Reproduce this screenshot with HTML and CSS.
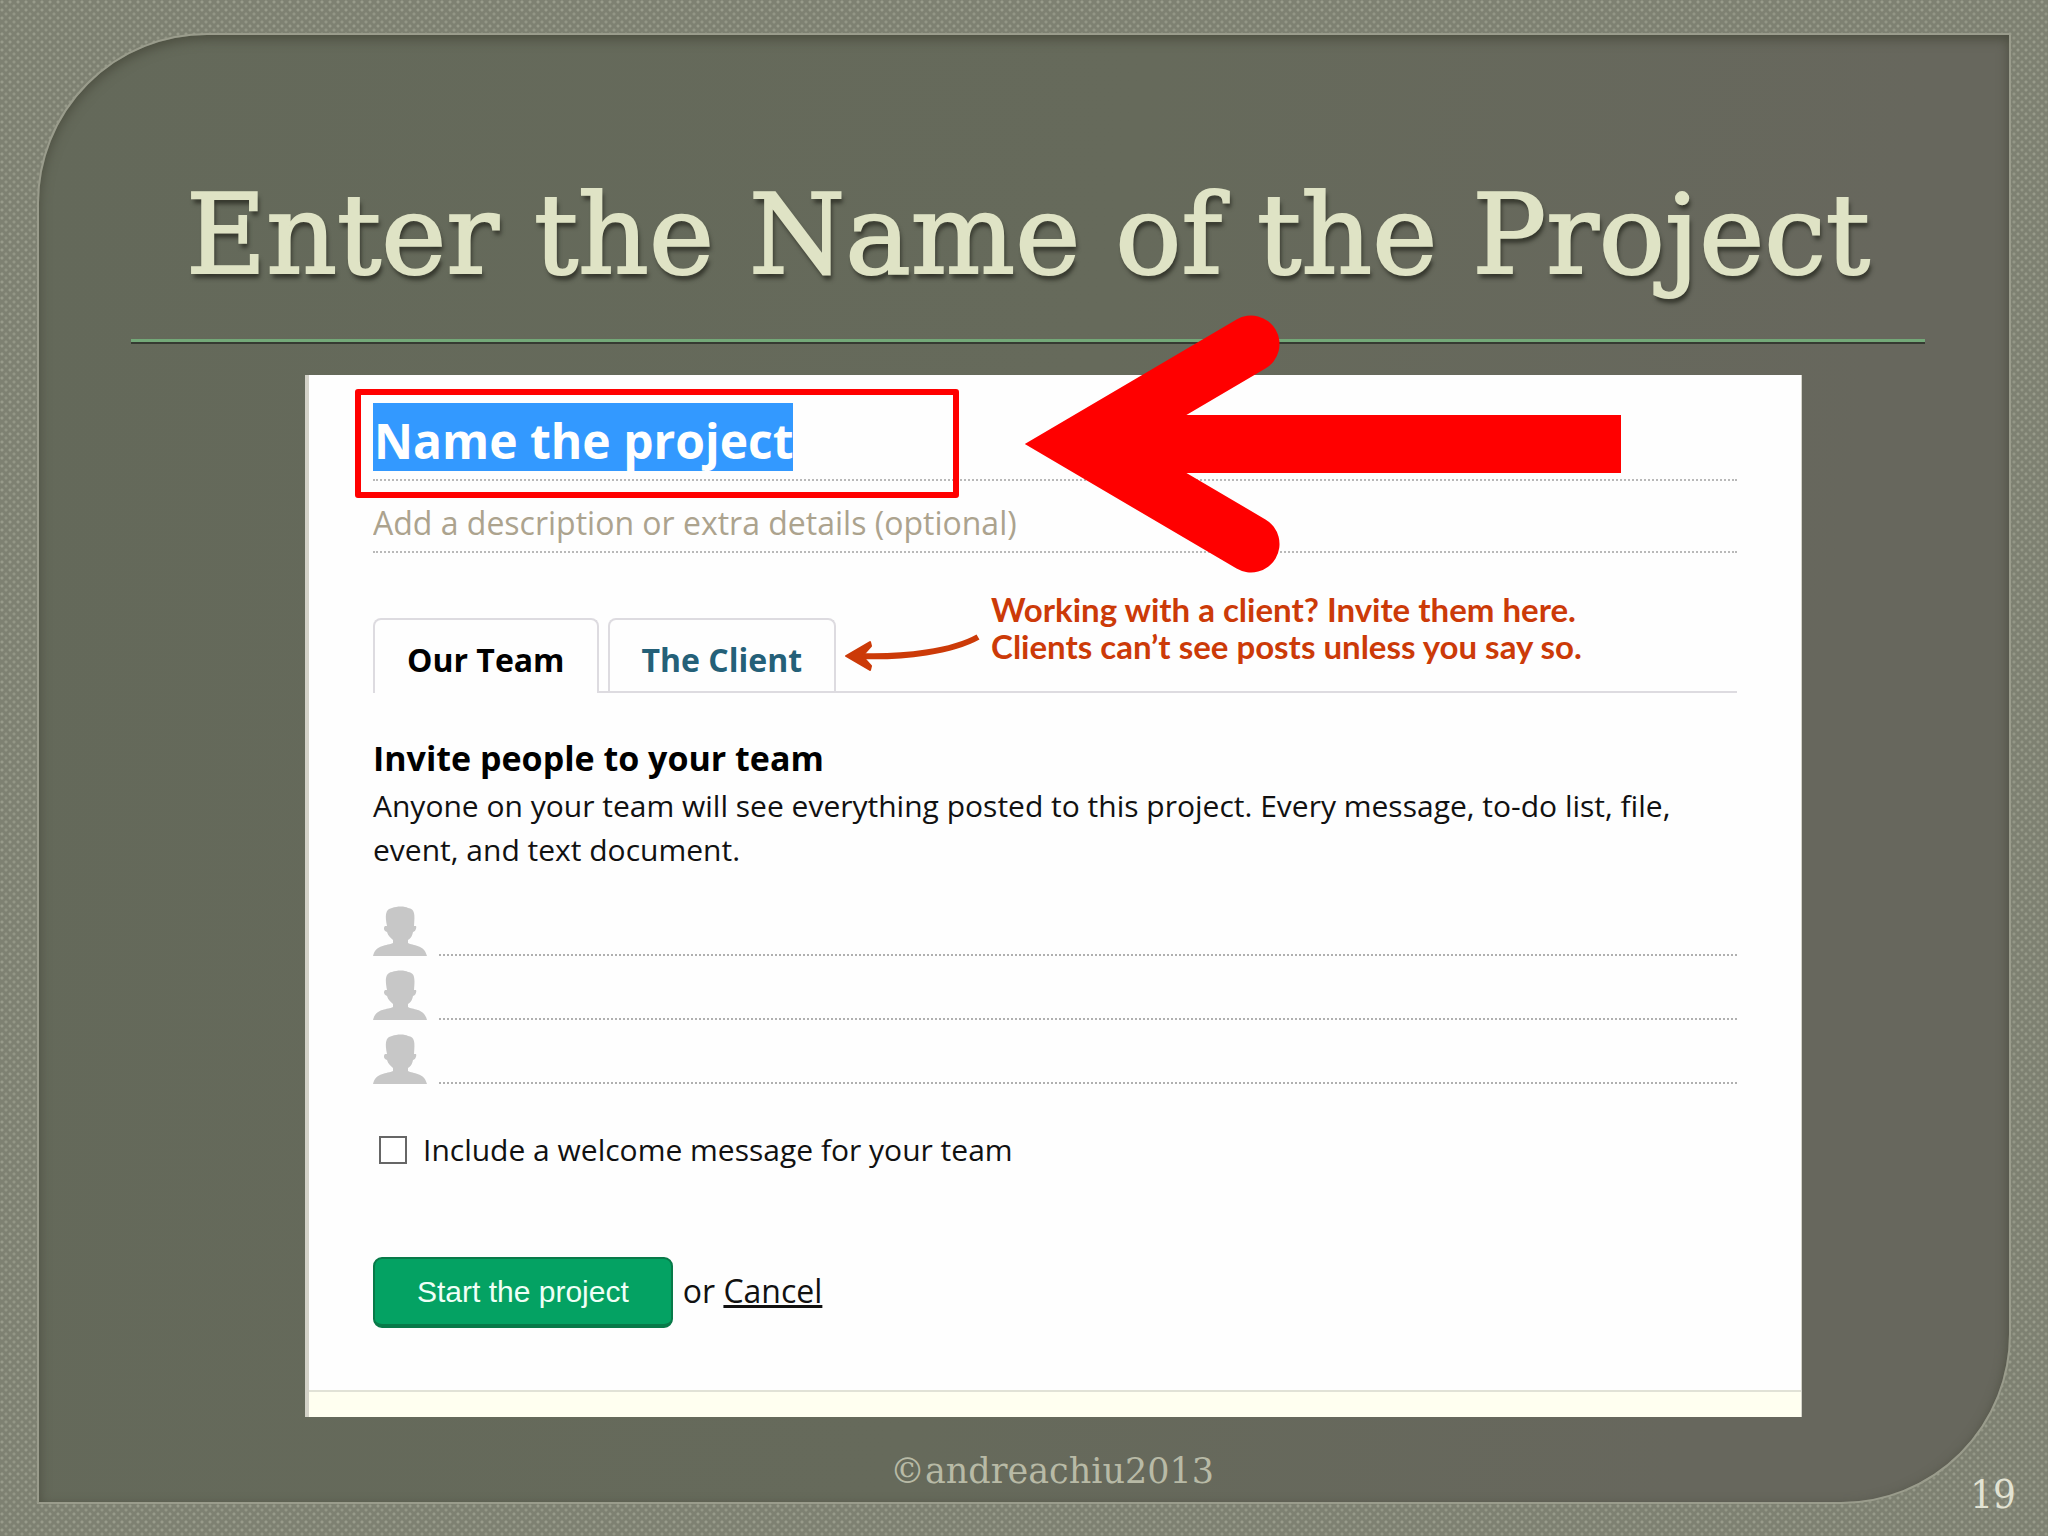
FILE: index.html
```html
<!DOCTYPE html>
<html lang="en">
<head>
<meta charset="utf-8">
<title>Enter the Name of the Project</title>
<link rel="stylesheet" href="styles.css">
</head>
<body>
<main class="slide">
  <h1 class="title">Enter the Name of the Project</h1>
  <div class="rule"></div>

  <form class="card">
    <div class="card-body">
      <div class="field field-name">
        <input class="name-input" type="text" value="Name the project" aria-label="Project name">
      </div>
      <div class="field field-desc">
        <input class="desc-input" type="text" placeholder="Add a description or extra details (optional)" aria-label="Description">
      </div>

      <div class="tabs">
        <button class="tab tab-active" type="button">Our Team</button>
        <button class="tab" type="button">The Client</button>
        <div class="hint">
          <svg class="hint-arrow" viewBox="0 0 136 40" aria-hidden="true">
            <path d="M133 5C108 19 60 26 12 24" fill="none" stroke="#cc3a08" stroke-width="6"/>
            <path d="M1 24L25 10L26 14L17 24L26 34L25 38Z" fill="#cc3a08" stroke="#cc3a08" stroke-width="2" stroke-linejoin="round"/>
          </svg>
          <p class="hint-text">Working with a client? Invite them here.<br>Clients can’t see posts unless you say so.</p>
        </div>
      </div>

      <h2 class="heading">Invite people to your team</h2>
      <p class="intro">Anyone on your team will see everything posted to this project. Every message, to-do list, file, event, and text document.</p>

      <svg class="symbols" aria-hidden="true">
        <symbol id="person" viewBox="0 0 54 50">
          <path d="M14 20C12 10 12 3 19 2C24 0 32 0 35 2C42 3 42 8 41 20L43 20C44 22 42 26 40 26C39 31 37 33 35 34L35 37C40 40 51 38 54 50H0C3 38 14 40 20 37L20 34C18 32 15 30 14 26C11 25 10 22 12 20Z" fill="#c7c7c7"/>
        </symbol>
      </svg>
      <div class="people">
        <div class="person"><svg class="avatar" aria-hidden="true"><use href="#person"/></svg><input class="person-input" type="text" aria-label="First person"></div>
        <div class="person"><svg class="avatar" aria-hidden="true"><use href="#person"/></svg><input class="person-input" type="text" aria-label="Second person"></div>
        <div class="person"><svg class="avatar" aria-hidden="true"><use href="#person"/></svg><input class="person-input" type="text" aria-label="Third person"></div>
      </div>

      <label class="welcome"><input class="check" type="checkbox">Include a welcome message for your team</label>

      <div class="actions">
        <button class="submit" type="button">Start the project</button>
        <span class="alternative">or <a class="cancel" href="#">Cancel</a></span>
      </div>
    </div>
    <div class="strip"></div>

    <div class="mark-box"></div>
    <svg class="mark-arrow" viewBox="0 0 600 260" aria-hidden="true">
      <path d="M229 31L59 131L229 231" fill="none" stroke="#f00" stroke-width="57" stroke-linecap="round"/>
      <path d="M59 102H599V160H59Z" fill="#f00"/>
    </svg>
  </form>

  <p class="credit">©andreachiu2013</p>
</main>
<p class="page-number">19</p>
</body>
</html>
```
FILE: styles.css
```css
* { box-sizing: border-box; }

body {
  margin: 0;
  min-height: 100vh;
  padding: 33px 37px 32px;
  position: relative;
  display: flex;
  background-color: #7e8172;
  background-image:
    radial-gradient(circle at 2px 2px, #989b8b 1px, transparent 2px),
    radial-gradient(circle at 6px 6px, #939686 1px, transparent 2px);
  background-size: 8px 8px;
  font-family: "Open Sans", "Noto Sans", sans-serif;
  font-size: 30px;
  color: #111;
}

h1, h2, p { margin: 0; }

.slide {
  flex: 1;
  display: flex;
  flex-direction: column;
  border: 2px solid #9a9c8c;
  border-radius: 170px 0;
  background: linear-gradient(100deg, #64695a 0%, #666a5b 50%, #67675d 85%);
  box-shadow: inset 0 4px 12px #4b4d3f;
}

.title {
  padding-top: 135px;
  padding-left: 8px;
  line-height: 130px;
  font-family: "DejaVu Serif", serif;
  font-weight: 400;
  font-size: 110px;
  text-align: center;
  white-space: nowrap;
  color: #dfe3c5;
  -webkit-text-stroke: 2px #dfe3c5;
  text-shadow: 2px 5px 4px #33352b;
}

.rule {
  height: 5px;
  margin: 39px 84px 31px 92px;
  background: #73a878;
  border-bottom: 2px solid #353a31;
}

.card {
  position: relative;
  margin: 0 207px 0 266px;
  background: #fefefe;
  border-left: 4px solid #d3d2c8;
  border-right: 1px solid #d3d2c8;
}

.card-body { padding: 28px 64px 62px; }

.field {
  display: flex;
  border-bottom: 2px dotted #b9b9b9;
}

.field-name { padding-bottom: 8px; }

input {
  border: 0;
  padding: 0;
  margin: 0;
  outline: 0;
  background: none;
  font-family: inherit;
  color: inherit;
}

.name-input {
  width: 420px;
  height: 68px;
  padding: 6px 0 0 1px;
  background: #3399ff;
  color: #fff;
  font-weight: 700;
  font-size: 48px;
}

.desc-input {
  flex: 1;
  height: 70px;
  padding-top: 13px;
  font-size: 32px;
}

.desc-input::placeholder { color: #aca38e; opacity: 1; }

.tabs {
  display: flex;
  gap: 9px;
  margin-top: 65px;
  border-bottom: 2px solid #dddbe0;
}

.tab {
  height: 73px;
  padding: 8px 32px 0;
  border: 2px solid #dddbe0;
  border-bottom: 0;
  border-radius: 8px 8px 0 0;
  background: #fefefe;
  font-family: inherit;
  font-size: 32px;
  font-weight: 700;
  color: #246078;
}

.tab-active {
  height: 75px;
  margin-bottom: -2px;
  padding-bottom: 2px;
  color: #000;
}

.hint {
  display: flex;
  gap: 10px;
  height: 73px;
  color: #cc3a08;
}

.hint-arrow {
  width: 136px;
  height: 40px;
  margin-top: 14px;
}

.hint-text {
  margin-top: -27px;
  font-family: Lato, sans-serif;
  font-weight: 700;
  font-size: 33px;
  line-height: 37px;
  white-space: nowrap;
}

.heading {
  margin-top: 41px;
  font-size: 34px;
  line-height: 48px;
  color: #000;
}

.intro { line-height: 44px; margin-top: 2px; }

.symbols { display: none; }

.people { margin-top: 20px; }

.person {
  display: flex;
  align-items: flex-end;
  gap: 12px;
  height: 64px;
}

.avatar { width: 54px; height: 50px; }

.person-input {
  flex: 1;
  height: 64px;
  font-size: 30px;
  border-bottom: 2px dotted #b0b0b0;
}

.welcome {
  display: flex;
  align-items: center;
  gap: 16px;
  margin-top: 44px;
  padding-left: 6px;
  line-height: 44px;
}

.check {
  appearance: none;
  width: 28px;
  height: 28px;
  border: 2px solid #666;
  background: #fff;
}

.actions {
  display: flex;
  align-items: center;
  gap: 10px;
  margin-top: 85px;
}

.submit {
  height: 71px;
  padding: 0 42px;
  border: 2px solid #087a49;
  border-bottom-width: 4px;
  border-radius: 9px;
  background: #04a263;
  font-family: "Liberation Sans", Arial, sans-serif;
  font-size: 30px;
  color: #effff6;
}

.alternative {
  padding-bottom: 4px;
  font-size: 32px;
  line-height: 44px;
}

.cancel { color: inherit; }

.strip {
  height: 27px;
  border-top: 2px solid #e1e2d6;
  background: #fffff0;
}

.mark-box {
  position: absolute;
  left: 46px;
  top: 14px;
  width: 604px;
  height: 109px;
  border: 6px solid #f00;
  border-radius: 3px;
}

.mark-arrow {
  position: absolute;
  left: 713px;
  top: -62px;
  width: 600px;
  height: 260px;
}

.credit {
  margin-top: 32px;
  padding-left: 56px;
  font-family: "DejaVu Serif", serif;
  font-size: 35px;
  line-height: 44px;
  text-align: center;
  color: #b8baa6;
}

.page-number {
  position: absolute;
  right: 32px;
  bottom: 18px;
  font-family: "DejaVu Serif Condensed", "DejaVu Serif", serif;
  font-size: 40px;
  line-height: 48px;
  color: #e2e3d3;
}
```
